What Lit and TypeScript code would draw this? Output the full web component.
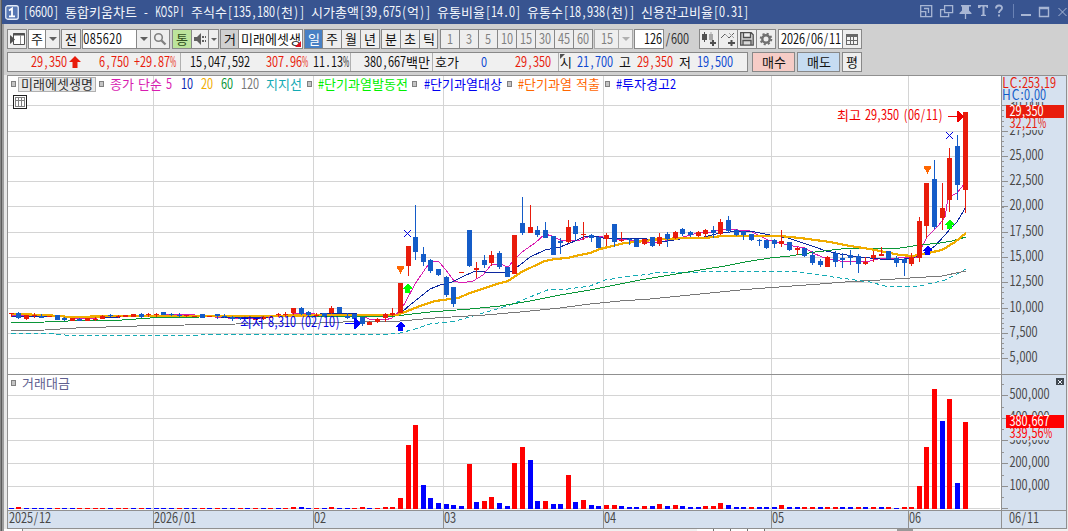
import { LitElement, html, svg, css } from "lit";
import { customElement, property } from "lit/decorators.js";

/* ---------- narrow fixed-cell lettering ---------- */
const isHan = (c: string) => c >= "\u3131";
const propWidth: Record<string, number> = {
  ",": 4, ".": 4, ":": 4, " ": 4, "(": 5, ")": 5, "%": 9, L: 7, C: 9, H: 9,
};
const cellWidth = (c: string, mono: boolean, dw: number) =>
  isHan(c) ? 12 : mono ? dw : propWidth[c] ?? dw;
const textWidth = (t: string, mono = true, dw = 6) =>
  [...t].reduce((w, c) => w + cellWidth(c, mono, dw), 0);
const kind = (c: string, mono: boolean) =>
  isHan(c) ? "h" : c === "%" ? (mono ? "m" : "p") : /[A-Z]/.test(c) ? (mono ? "k" : "u") : "l";
const scales: Record<string, number> = { h: 1, l: 0.78, m: 0.48, p: 0.66, k: 0.62, u: 0.86 };

/* One <text> per script run, every character centred in its cell. */
function glyphs(t: string, x: number, y: number, color: string, mono = false, dw = 6) {
  const runs: { k: string; s: string; xs: number[] }[] = [];
  let cx = x;
  for (const c of t) {
    const w = cellWidth(c, mono, dw);
    const k = kind(c, mono);
    let run = runs[runs.length - 1];
    if (!run || run.k !== k) runs.push((run = { k, s: "", xs: [] }));
    run.s += c;
    run.xs.push(+((cx + w / 2) / scales[k]).toFixed(2));
    cx += w;
  }
  return runs
    .filter((r) => r.s.trim())
    .map(
      (r) => svg`<text class=${r.k === "h" ? "han" : "lat"} fill=${color} y=${y}
        transform="scale(${scales[r.k]},1)" x=${r.xs.join(" ")} xml:space="preserve">${r.s}</text>`
    );
}

const fontCss = css`
  text { font-family: "Noto Sans CJK KR", "Noto Sans", sans-serif; text-anchor: middle; white-space: pre; }
  .han { font-size: 13px; font-weight: 400; }
  .lat { font-size: 14px; font-weight: 400; }
`;

@customElement("cell-text")
class CellText extends LitElement {
  @property() text = "";
  @property() color = "#111";
  @property({ type: Number }) dw = 6;
  static styles = [
    fontCss,
    css`
      :host { display: block; flex: none; }
      svg { display: block; overflow: visible; }
    `,
  ];
  render() {
    return html`<svg width=${textWidth(this.text, true, this.dw)} height="18">
      ${glyphs(this.text, 0, 14, this.color, true, this.dw)}
    </svg>`;
  }
}

/* ---------- market data, in chart pixels ---------- */
// direction, body top, body bottom, wick top, wick bottom
type Candle = [string, number, number, number?, number?];
const at = (base: number, rows: Candle[]): Candle[] =>
  rows.map(([d, a, b, h, l]) => [
    d, base + a / 3, base + b / 3, base + (h || a) / 3, base + (l || b) / 3,
  ]);
const candles: Candle[] = [
  ...at(290, [
    ["r",70,73,70,80],["b",69,84,66,87],["r",75,87,75,90],["r",75,78,69,84],["b",78,84,72,84],["r",78,81],
    ["b",75,90],["b",83,89,80,93],["r",84,93],["b",87,92,84,93],["r",84,94],["r",86,89,80,92],
    ["r",78,86,75,87],["b",75,78,72,81],["r",77,80,74,84],["r",75,81],["r",72,81],["b",72,81,69,84],
    ["r",72,75,69,81],["r",72,75,68,82],["b",66,75],["b",72,75,69,77],["b",74,77,69,82],["r",76,79,74,80],
    ["r",78,80],["b",72,84],["r",78,81],["b",72,78,72,87],["b",77,80,72,84],["b",82,86,78,92],
    ["b",84,87,82,90],["r",84,88],["r",84,90],["r",80,86,78,90],["r",80,84],["r",72,76,69,80],
    ["r",72,76,66,81],["r",54,69,54,75],["b",54,72,51,75],["b",66,74,63,78],["r",74,77,68,80],
    ["b",68,78],["r",54,69,48,72],["b",51,69],["b",78,84,70,87],["b",72,88,72,100],
  ]),
  ...at(190, [
    ["b",381,402,381,408],["r",396,405,393,405],["r",387,395,384,399],["r",372,384,369,396],["r",370,376,354,378],
    ["r",279,370],["r",168,228,168,258],["b",141,186,45,210],["b",192,216,171,228],["b",210,243,207,249],
    ["b",237,255,237,258],["b",261,315,258,321],["b",291,342,291,351],["r",246,249],["b",120,228,120,231],
    ["r",234,240,216,264],["b",210,225,195,234],["r",195,219,183,228],["b",189,231,183,237],["b",231,261],
    ["r",135,252],["b",99,129,21,135],["r",111,129,45,129],["b",120,135,108,141],["b",120,144,96,144],
    ["b",138,195],["b",153,159,144,192],["r",111,156,90,159],["b",108,132,96,150],["r",132,135,96,150],
    ["b",135,144,132,156],["b",141,174],["r",135,147,129,168],["b",102,156,102,171],["r",150,153,126,156],
    ["b",147,150,144,165],["b",147,171],["r",147,162,147,165],["b",141,168,141,171],["r",141,162,129,168],
    ["b",132,147,126,171],["r",126,144,123,148],["b",117,132,114,138],["b",126,135,123,141],["r",126,138,123,141],
    ["r",120,132,117,141],["b",120,129,108,144],["r",96,132,87,135],["b",90,123,78,129],["b",120,135,117,138],
    ["b",123,135,123,150],["b",132,150,132,153],["b",150,153,147,168],["b",150,174,150,177],["b",150,162,147,174],
    ["r",153,162,120,171],["b",156,180,156,183],["r",174,180,171,195],["b",174,198,174,201],["b",195,219,183,225],
    ["b",213,225,207,231],["r",201,231,198,231],
  ]),
  ...at(95, [
    ["b",474,501,468,516],["b",489,495,474,519],["b",480,489,465,510],["b",483,507,477,534],["r",501,507,486,510],
    ["r",480,489,468,501],["r",477,483,456,483],["b",468,492],["b",489,504,483,516],["b",492,504,489,543],
    ["r",486,507,474,513],["r",378,489,366,501],["r",264,393,264,429],["b",252,396,195,402],["r",339,369,264,405],
    ["r",189,315,159,351],["b",153,270,120,315],["r",51,285,51,354],
  ]),
];
const volumes =
  "b1 r2 b1 b1 b1 b1 r1 b1 b1 r1 r1 r1 r1 b1 r1 r1 b1 r1 b1 b1 b1 b1 r1 b1 b1 r1 b1 r1 b1 b1 r1 b1 r1 b1 r1 b1 r1 r2 b2 b1 r1 b1 r2 b1 b1 r1 " +
  "r2 b1 r1 r2 r2 r11 r64 r84 b24 b11 b6 b5 b4 b3 r45 b7 r8 r12 b6 b3 r46 r62 b49 b8 r8 b5 b5 r34 b7 r9 b4 b3 r4 r4 b3 b2 b2 r3 b3 r5 b3 r4 b3 b2 b2 " +
  "r3 r3 r6 b4 b2 b2 r2 b2 b2 b2 r4 b2 b2 r2 r2 b2 r2 r2 b2 b2 r2 b2 r2 b2 r2 b1 r2 r2 r23 r62 r120 b88 r110 b26 r87";

const lines = {
  ma5: "11,315 27,316 50,315 65,317 80,319 97,318 120,316 140,315 165,315 185,314 215,317 240,319 262,318 285,315 300,313 315,314 335,314 350,313 362,315 369,319 385,320 392,318 400,311 405,303 415,284 430,262 434,261 439,262 446,270 454,281 462,283 473,281 483,275 491,265 500,264 508,267 515,259 522,252 535,243 545,234 552,236 560,240 580,240 590,236 603,237 613,239 630,240 652,243 665,241 680,238 690,235 703,232 712,232 725,229 750,231 758,235 768,240 780,243 793,246 805,248 813,253 822,257 833,260 840,261 870,261 880,258.5 917,257.5 920,251 927,237 938,226 945,217 948,198 957,193 965,183",
  ma10: "11,316 40,316 70,317 95,318 120,317 145,316 180,315 220,317 255,318 290,316 320,314 350,313 370,316 395,316 402,312 410,305 420,297 430,289 440,285 452,282 462,277 475,271 485,272 505,273 512,271 520,265 530,257 545,250 560,247 575,241 585,236 595,236 603,238 615,239 640,238 660,241 668,241 680,239 700,238 712,235 720,233 740,231 755,232 770,235 788,238 800,242 815,247 826,251 840,254 860,257 885,259.5 905,259 920,256 935,246 945,235 950,229 957,222 966,207",
  ma20: "11,314 45,315 70,317 95,316.5 130,316 240,316 300,315.5 340,315 397,315 405,312 420,306 435,301 458,298 470,293 485,288 497,284 508,281 520,273 532,267 545,261 555,259 567,258 580,255 590,253 600,249 608,247 625,243 645,241 660,239 690,238 705,238 722,236 780,236 800,238 815,240 830,242 850,246 870,249 880,251 900,255 913,256 928,253 942,250 955,242 966,233",
  ma60: "11,323 45,322 91,320 122,320 150,318 200,317 240,316.5 360,316 395,316 430,312 470,309 500,306 530,301 560,295 590,290 610,286 640,280 670,275 700,270 725,266 745,262 770,258 790,256 815,252 850,248 900,248 920,245 940,243 952,241 966,237",
  ma120: "11,331 45,330 76,328 106,327 137,326 185,325 236,324 320,323 366,321 400,321 435,318 485,315 520,312 560,308 590,304 620,301 650,299 680,296 710,293 740,290 765,288 820,284 845,282 880,280 910,278 942,276 966,271",
  support: "11,333 45,333 65,335 200,335 230,334 250,334 270,335 300,334 360,334 380,335 400,333 415,329 430,324 455,321 470,317 490,311 510,305 525,299 540,293 550,289 568,289 590,286 605,280 625,277 650,274 660,272 680,273 700,272 740,271 770,271 800,272 820,275 840,278 870,282 885,286 905,287 920,286 945,280 957,274 966,269",
};
const priceGrid: [number, string][] = [
  [105, "30,000"], [131, "27,500"], [156, "25,000"], [181, "22,500"], [206, "20,000"], [232, "17,500"],
  [257, "15,000"], [282, "12,500"], [308, "10,000"], [333, "7,500"], [358, "5,000"],
];
const volGrid: [number, string][] = [
  [395, "500,000"], [418, "400,000"], [440, "300,000"], [463, "200,000"], [486, "100,000"], [508, ""],
];
const months: [number, string][] = [
  [8, "2025/12"], [153, "2026/01"], [313, "02"], [443, "03"], [603, "04"], [771, "05"], [908, "06"],
];
const OX = 7, OY = 75;

@customElement("price-chart")
class PriceChart extends LitElement {
  static styles = [
    fontCss,
    css`
      :host { display: block; }
      svg { display: block; shape-rendering: crispEdges; }
      .line { fill: none; stroke-width: 1; }
      .ma5 { stroke: #d81cb0; }
      .ma10 { stroke: #0c28a0; }
      .ma20 { stroke: #f0ac00; stroke-width: 2.2; }
      .ma60 { stroke: #0a9638; }
      .ma120 { stroke: #787878; }
      .support { stroke: #14aab4; stroke-dasharray: 4.6 3; }
    `,
  ];
  private rect(x: number, y: number, w: number, h: number, fill: string, stroke = "none") {
    return svg`<rect x=${x} y=${y} width=${w} height=${h} fill=${fill} stroke=${stroke}></rect>`;
  }
  private left(i: number) {
    return Math.floor(9.3 + i * 7.63);
  }
  private candle(c: Candle, i: number) {
    const color = c[0] === "r" ? "#e81c0c" : "#145cc8";
    const [t, b, h, l] = c.slice(1).map((v) => Math.round(v as number));
    const x = this.left(i);
    return [this.rect(x, t, 5, Math.max(1, b - t), color), this.rect(x + 2, h, 1, Math.max(1, l - h), color)];
  }
  private bullet(x: number, y: number) {
    return this.rect(x + 0.5, y + 0.5, 4, 5, "#c4c4c4", "#808080");
  }
  private up(x: number, y: number, c: string) {
    return svg`<path fill=${c} d="M${x + 4} ${y}h1l4 4v1h-2v4h-5v-4h-2v-1z"></path>`;
  }
  private down(x: number, y: number) {
    return svg`<path fill="#ff6600" d="M${x} ${y}h7v3h-1v1h-1v2h-1v2h-1v-2h-1v-2h-1v-1h-1z"></path>`;
  }
  private cross(x: number, y: number) {
    return svg`<path stroke="#0000e0" fill="none" d="M${x} ${y}l7 7M${x + 7} ${y}l-7 7"></path>`;
  }
  private ticks() {
    const out = [];
    for (let k = -1; k < 54; k++) {
      const y = Math.round(105.4 + k * 5.056);
      if (y < 362 && y > 100) out.push(this.rect(1002, y, 2, 1, "#969696"));
    }
    for (const y of [384, 407, 429, 452, 475, 497]) out.push(this.rect(1002, y, 2, 1, "#969696"));
    return out;
  }
  render() {
    const axis = "#d6e1ef", edge = "#909090", grid = "#d4d4d4", ink = "#484848";
    const g = glyphs;
    return html`<svg width="1061" height="454" viewBox="${OX} ${OY} 1061 454">
      ${this.rect(7, 75, 1060, 454, "#fff")}
      ${this.rect(1002, 76, 64, 452, axis)}${this.rect(8, 511, 1058, 17, axis)}
      ${[...priceGrid, ...volGrid].map(([y]) => this.rect(8, y, 992, 1, grid))}
      ${months.slice(1).map(([x]) => [this.rect(x, 76, 1, 434, grid), this.rect(x, 511, 1, 17, edge)])}
      ${this.ticks()}
      ${[...priceGrid, ...volGrid].map(([y, t]) => [this.rect(1002, y, 6, 1, edge), t ? g(t, 1009.5, y + 4, ink) : ""])}
      ${volumes.split(" ").map((v, i) => {
        const h = +v.slice(1);
        return this.rect(this.left(i), 509 - h, 5, h, v[0] === "r" ? "#ff0000" : "#0000ff");
      })}
      <polyline class="line support" points=${lines.support}></polyline>
      <polyline class="line ma120" points=${lines.ma120}></polyline>
      <polyline class="line ma5" points=${lines.ma5}></polyline>
      <polyline class="line ma10" points=${lines.ma10}></polyline>
      <polyline class="line ma60" points=${lines.ma60}></polyline>
      <polyline class="line ma20" points=${lines.ma20}></polyline>
      ${candles.map((c, i) => this.candle(c, i))}
      ${this.down(397, 266)}${this.down(924, 166)}${this.cross(404, 230)}${this.cross(946, 132)}
      ${this.up(403, 284, "#00ff00")}${this.up(945, 220, "#00ff00")}
      ${this.up(396, 322, "#0000ff")}${this.up(923, 246, "#0000ff")}
      ${g("최고 29,350 (06/11)", 837, 120, "#f00000")}
      <path fill="#f00000" d="M948 116h9v-5h1l6 5v1l-6 5h-1v-5h-9z"></path>
      ${g("최저 8,310 (02/10)", 240, 327, "#0000e0")}
      <path fill="#0000ff" d="M345 323h9v-5h1l5 5v1l-5 5h-1v-5h-9z"></path>
      ${this.bullet(11, 81)}${this.rect(18.5, 77.5, 77, 14, "#e8e8e8", "#b0b0b0")}
      ${g("미래에셋생명", 21, 89, "#303030")}
      ${[99, 307, 412, 507, 605].map((x) => this.bullet(x, 81))}
      ${g("종가 단순 5", 110, 89, "#d81cb0")}${g("10", 181, 89, "#0c28b0")}${g("20", 201, 89, "#f0ac00")}
      ${g("60", 221, 89, "#0a9638")}${g("120", 241, 89, "#787878")}${g("지지선", 266, 89, "#14aab4")}
      ${g("#단기과열발동전", 318, 89, "#00f000")}${g("#단기과열대상", 424, 89, "#0000f0")}
      ${g("#단기과열 적출", 518, 89, "#ff6600")}${g("#투자경고2", 616, 89, "#0000f0")}
      ${this.rect(13.5, 95.5, 13, 13, "#fff", "#202020")}
      <path fill="none" stroke="#808080" d="M15.500 97.500h9v9h-9zM15.500 100.500h9M18.500 97.500v9M21.500 97.500v9"></path>
      ${this.bullet(11, 380)}${g("거래대금", 22, 388, "#606090")}
      ${this.rect(1004, 76, 62, 26, axis)}
      ${g("LC:253,19", 1002, 88, "#e81c0c")}${g("HC:0,00", 1002, 100, "#145cc8")}
      ${this.rect(1006, 105, 58, 13, "#e81c0c")}${g("29,350", 1009.5, 116, "#fff")}
      ${this.rect(1008, 118, 56, 12, axis)}${g("32,21%", 1009.5, 128, "#e81c0c")}
      ${this.rect(1006, 415, 58, 13, "#ff0000")}${g("380,667", 1009.5, 426, "#fff")}
      ${this.rect(1008, 428, 56, 12, axis)}${g("339,56%", 1009.5, 438, "#ff0000")}
      ${this.rect(1056, 378, 8, 7, "#404850")}
      <path stroke="#e8eef6" fill="none" d="M1058 380l4 4M1062 380l-4 4"></path>
      ${months.map(([x, t]) => g(t, x + 1, 523, ink))}${g("06/11", 1009, 523, ink)}
      ${this.rect(8, 374, 1058, 1, edge)}${this.rect(8, 510, 1058, 1, edge)}${this.rect(1001, 76, 1, 452, edge)}
      ${this.rect(7.5, 75.5, 1059, 453, "none", edge)}
      ${this.rect(1067, 75, 1, 454, "#e8e8e8")}
    </svg>`;
  }
}

/* ---------- window ---------- */
const T = (text: string, color = "#111", dw = 6) =>
  html`<cell-text .text=${text} .color=${color} .dw=${dw}></cell-text>`;
const caret = (c = "#606060") =>
  html`<svg width="8" height="4"><path fill=${c} d="M0 0h8L4 4z"></path></svg>`;

@customElement("app-root")
class AppRoot extends LitElement {
  static styles = css`
    :host { display: block; width: 1068px; height: 531px; overflow: hidden; background: #d0d0d0; }
    .app { display: flex; height: 531px; }
    .edge { width: 4px; flex: none; box-sizing: border-box; background: #9c9c9c; border-left: 1px solid #888; box-shadow: inset 1px 0 #5c5c5c; }
    .main { flex: 1; min-width: 0; display: flex; flex-direction: column; }
    .title { height: 24px; margin-left: -2px; background: #385490; display: flex; align-items: center; padding: 0 0 0 3px; box-sizing: border-box; }
    .badge { width: 14px; height: 15px; margin-right: 4px; }
    .title cell-text { margin-top: -1px; }
    .wicons { margin-left: auto; display: block; }
    svg { display: block; flex: none; }
    .row { display: flex; height: 20px; margin-left: 3px; }
    .tools { margin-top: 5px; }
    .quote { margin-top: 3px; margin-bottom: 3px; }
    .group { display: flex; box-sizing: border-box; height: 20px; border: 1px solid #888; background: #888; gap: 1px; margin-right: 1px; flex: none; }
    .group > * { background: #eee; display: flex; align-items: center; justify-content: center; flex: none; }
    .group > .white { background: #fff; }
    .group > .green { background: #bce49c; }
    .group > .on { background: #4880c4; }
    .group > .grey { background: #d0d0d0; }
    .dim { border-color: #a8a8a8; background: #a8a8a8; }
    .w13 { width: 13px; } .w16 { width: 16px; }
    .w9 { width: 9px; } .w17 { width: 17px; } .w18 { width: 18px; }
    .w23 { width: 23px; } .w28 { width: 28px; } .w53 { width: 53px; } .w63 { width: 63px; }
    .group > .start { justify-content: flex-start; }
    .group > .end { justify-content: flex-end; box-sizing: border-box; padding-right: 1px; }
    .name { position: relative; }
    .corner { position: absolute; right: 1px; bottom: 1px; width: 0; height: 0; border-left: 6px solid transparent; border-bottom: 6px solid #e01020; }
    .g1 { margin-right: 2px; }
    .of { width: 34px; display: flex; align-items: center; }
    .strip { display: flex; box-sizing: border-box; width: 741px; height: 20px; border: 1px solid #888; background: #f0f0f0; margin-right: 4px; flex: none; }
    .strip > div { display: flex; align-items: center; box-sizing: border-box; border-right: 1px solid #b0b0b0; flex: none; }
    .price { width: 173px; padding-left: 23px; }
    .vol { width: 170px; padding-left: 9px; }
    .amt { width: 82px; justify-content: flex-end; padding-right: 2px; }
    .hoga { width: 126px; padding-left: 2px; }
    .strip > .ohl { flex: 1; border-right: 0; padding-left: 1px; position: relative; }
    .mark { position: absolute; left: 1px; top: 1px; width: 0; height: 0; border-right: 5px solid transparent; border-top: 5px solid #505050; }
    .s1 { margin-left: 2px; } .s5 { margin-left: 5px; } .s6 { margin-left: 6px; }
    .s16 { margin-left: 16px; } .s18 { margin-left: 18px; } .s28 { margin-left: 28px; } .s22 { margin-left: 22px; }
    .buy, .sell { width: 41px; }
    .group > .buy { background: #f6ccc6; }
    .group > .sell { background: #c6dcf2; }
    .body { display: flex; background: #e8e8e8; padding-left: 3px; }
    .foot { height: 2px; background: #f0f0f0; display: flex; }
    .foot i { height: 2px; flex: none; }
    .f1 { width: 18px; background: #fff; } .f2 { width: 1px; background: #888; } .f3 { width: 674px; }
    .f4 { width: 17px; background: #fff; border-right: 1px solid #707070; box-sizing: border-box; }
    .f5 { width: 132px; } .f6 { width: 16px; background: #999; }
  `;
  render() {
    const red = "#e81c0c", blue = "#0c48d0", dim = "#808080";
    return html`<div class="app">
      <div class="edge"></div>
      <div class="main">
        <div class="title">
          <svg class="badge" viewBox="0 0 14 15">
            <rect x=".75" y=".75" width="12.5" height="13.5" rx="2" fill="#5878b4" stroke="#e4ecf8" stroke-width="1.3"></rect>
            <path d="M4 5.5l3-2v7M4 11.3h6" stroke="#fff" stroke-width="1.8" fill="none"></path>
          </svg>
          ${T("[6600] 통합키움차트 - KOSPI 주식수[135,180(천)] 시가총액[39,675(억)] 유통비율[14.0] 유통수[18,938(천)] 신용잔고비율[0.31]", "#f4f7fc")}
          <svg class="wicons" width="150" height="24" viewBox="918 0 150 24" fill="none" stroke="#a8b6d4" stroke-width="1.3">
            <path d="M920.7 5.7h11v11h-11zM920.7 11.7h5v5M924 8.500h4.500v4.500"></path>
            <path d="M944.6 5.6h8v7h-8zM944 9.6h-3.4v7h8v-3"></path>
            <path d="M961 5h10v1.5h-2v4l2.5 2.5v1h-12v-1l2.5-2.500v-4h-1z" fill="#a8b6d4" stroke="none"></path>
            <path d="M965.5 14v5"></path>
            <path d="M978 8V5h10v3h-1l-1-1.500h-1.500v8l1.500.5v1h-5v-1l1.500-.5v-8h-1.500l-1 1.500z" fill="#a8b6d4" stroke="none"></path>
            <path d="M996 8.500c0-4 6-4 6-.5 0 2.500-3 2-3 5M999 14.500v2" stroke-width="1.900"></path>
            <path d="M1013.500 4v14" stroke="#6a82b4" stroke-width="1"></path>
            <path d="M1021 15h10" stroke-width="2"></path>
            <path d="M1039.500 7.500h9v9h-9zM1039 8.500h10" stroke-width="1.400"></path>
            <path d="M1058.500 8l8 8M1066.500 8l-8 8" stroke-width="1"></path>
          </svg>
        </div>
        <div class="row tools">
          <div class="group"><div class="w18">
            <svg width="17" height="16" viewBox="0 0 17 16"><path d="M4.500 2.500h11v11h-11z" fill="#fff" stroke="#505050"></path><path d="M4 3.500h12" stroke="#505050" stroke-width="2"></path><path d="M11.500 4v9" stroke="#909090"></path><path d="M1 4v9l5-4.500z" fill="#505050"></path></svg>
          </div></div>
          <div class="group"><div class="w16 white">${T("주")}</div><div class="w13">${caret()}</div></div>
          <div class="group"><div class="w18">${T("전")}</div></div>
          <div class="group g1"><div class="w53 white start">${T("085620", "#111", 6.5)}</div><div class="w13">${caret()}</div>
            <div class="w18"><svg width="14" height="14" fill="none" stroke="#808080" stroke-width="1.600"><circle cx="5.500" cy="5.500" r="3.800"></circle><path d="M8.500 8.500l4 4" stroke-width="2.300"></path></svg></div></div>
          <div class="group"><div class="w18 green">${T("통", "#305020")}</div>
            <div class="w16"><svg width="13" height="12" fill="#606060"><path d="M0 4h3l4-4v12L3 8H0zM8 3h2v2H8zM11 3h1v2h-1zM8 7h2v2H8zM11 7h1v2h-1z"></path></svg></div>
            <div class="w9"><svg width="6" height="3"><path fill="#606060" d="M0 0h6L3 3z"></path></svg></div></div>
          <div class="group"><div class="w17 grey">${T("거")}</div><div class="w63 white name">${T("미래에셋생")}<span class="corner"></span></div></div>
          <div class="group"><div class="w17 on">${T("일", "#fff")}</div><div class="w18">${T("주")}</div><div class="w18">${T("월")}</div><div class="w18">${T("년")}</div></div>
          <div class="group g1"><div class="w18">${T("분")}</div><div class="w18">${T("초")}</div><div class="w17">${T("틱")}</div></div>
          <div class="group">${["1", "3", "5", "10", "15", "30", "45", "60"].map((n) => html`<div class="w18">${T(n, dim)}</div>`)}</div>
          <div class="group dim"><div class="w23">${T("15", dim)}</div><div class="w13">${caret("#b0b0b0")}</div></div>
          <div class="group"><div class="w28 white end">${T("126")}</div></div>
          <div class="of">${T("/600", "#303030")}</div>
          <div class="group g1">
            <div class="w18"><svg width="17" height="16"><path d="M1 3h5v6H1zM3 1h1v10H3z" fill="#505050"></path><path d="M8 3h4v6H8zM9.500 1h1v10h-1z" fill="#a8a8a8"></path><path d="M9 12h6M12 9v6" stroke="#505050" stroke-width="2"></path></svg></div>
            <div class="w18"><svg width="17" height="16" fill="none"><path d="M1 7l4-4 4 4 5-5" stroke="#606060"></path><path d="M5 3l3 3M9 2l5 5" stroke="#a0a0a0"></path><path d="M8 12h7M11.500 9v6" stroke="#505050" stroke-width="2"></path></svg></div>
            <div class="w18"><svg width="14" height="14" fill="#d8d8d8" stroke="#505050" stroke-width="1.300"><path d="M.7.700h10.500l2 2v10.500H.7zM3.500 1v4.500h7V1M3 13V8.500h8V13"></path></svg></div>
            <div class="w18"><svg width="14" height="14" viewBox="-7 -7 14 14" fill="none" stroke="#707070"><circle r="3.700" stroke-width="2.400"></circle><circle r="5.300" stroke-width="2" stroke-dasharray="2.080 2.080"></circle></svg></div>
          </div>
          <div class="group"><div class="w63 white">${T("2026/06/11")}</div>
            <div class="w18"><svg width="12" height="11"><path d="M0 0h12v11H0z" fill="#686868"></path><path d="M1 3h3v3H1zM5 3h2v3H5zM8 3h3v3H8zM1 7h3v3H1zM5 7h2v3H5zM8 7h3v3H8z" fill="#f4f4f4"></path></svg></div></div>
        </div>
        <div class="row quote">
          <div class="strip">
            <div class="price">${T("29,350", red)}<svg class="s1" width="12" height="12"><path d="M6 0l6 6H8.500v6h-5V6H0z" fill=${red}></path></svg>
              <span class="s18">${T("6,750", red)}</span><span class="s5">${T("+29.87%", red)}</span></div>
            <div class="vol">${T("15,047,592")}<span class="s16">${T("307.96%", red)}</span><span class="s5">${T("11.13%")}</span></div>
            <div class="amt">${T("380,667백만")}</div>
            <div class="hoga">${T("호가")}<span class="s22">${T("0", blue)}</span><span class="s28">${T("29,350", red)}</span></div>
            <div class="ohl"><span class="mark"></span>${T("시")}<span class="s5">${T("21,700", blue)}</span><span class="s6">${T("고")}</span><span class="s6">${T("29,350", red)}</span><span class="s6">${T("저")}</span><span class="s6">${T("19,500", blue)}</span></div>
          </div>
          <div class="group g1"><div class="buy">${T("매수")}</div></div>
          <div class="group g1"><div class="sell">${T("매도")}</div></div>
          <div class="group"><div class="w18">${T("평")}</div></div>
        </div>
        <div class="body"><price-chart></price-chart></div>
        <div class="foot"><i class="f1"></i><i class="f2"></i><i class="f3"></i>${[0, 1, 2, 3].map(() => html`<i class="f4"></i>`)}<i class="f5"></i><i class="f6"></i></div>
      </div>
    </div>`;
  }
}
